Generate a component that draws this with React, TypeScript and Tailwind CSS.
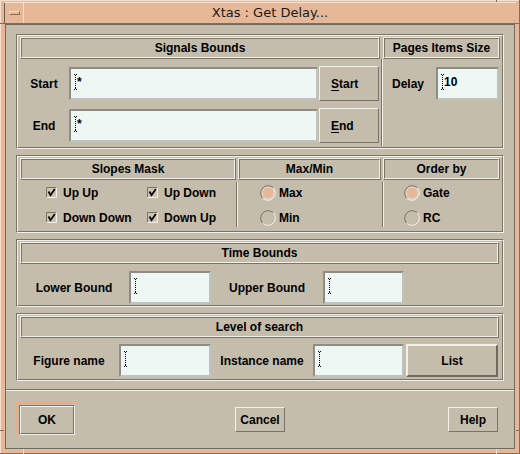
import type { ReactNode } from "react";

const sunk = "border-t-[#7a7466] border-l-[#7a7466] border-b-[#f3f0e9] border-r-[#f3f0e9]";
const raised = "border-t-[#f3f0e9] border-l-[#f3f0e9] border-b-[#7a7466] border-r-[#7a7466]";

function Panel({ className, children }: { className: string; children: ReactNode }) {
  return (
    <div className={`border ${sunk} ${className}`}>
      <div className={`h-full border ${raised} p-px flex flex-col`}>{children}</div>
    </div>
  );
}

function Header({ className, children }: { className: string; children: ReactNode }) {
  return (
    <div className={`h-[22px] shrink-0 border ${raised} ${className}`}>
      <div className={`h-full border ${sunk} flex items-center justify-center text-[12px] font-bold`}>
        {children}
      </div>
    </div>
  );
}

function VSep({ className = "" }: { className?: string }) {
  return <div className={`w-[2px] shrink-0 border-l border-r border-l-[#7a7466] border-r-[#f3f0e9] ${className}`} />;
}

// dotted I-beam text cursor
function Caret() {
  return (
    <svg width="3" height="16" viewBox="0 0 3 16" className="shrink-0">
      <path
        d="M0 0h1v1H0zM2 0h1v1H2zM1 1h1v1H1zM1 3h1v1H1zM1 5h1v1H1zM1 7h1v1H1zM1 9h1v1H1zM1 11h1v1H1zM1 13h1v1H1zM0 15h1v1H0zM2 15h1v1H2zM1 14h1v1H1z"
        fill="#000"
      />
    </svg>
  );
}

function Field({ className, text }: { className: string; text?: string }) {
  return (
    <div
      className={`shrink-0 border-2 border-t-[#8e8c86] border-l-[#8e8c86] border-b-[#bdc3be] border-r-[#bdc3be] bg-[#eef7f3] flex items-start pl-[3px] pt-[5px] ${className}`}
    >
      <Caret />
      {text && <span className="text-[12px] font-bold leading-[16px]">{text}</span>}
    </div>
  );
}

function BoundRow({ label, mn, rest }: { label: string; mn: string; rest: string }) {
  return (
    <div className="h-[35px] flex items-center">
      <span className="w-[50px] text-center text-[12px] font-bold">{label}</span>
      <Field className="w-[249px] h-[33px]" text="*" />
      <div className={`ml-px w-[60px] h-[35px] border ${raised} text-[12px] font-bold flex items-center pl-[11px]`}>
        <span className="underline underline-offset-2">{mn}</span>
        {rest}
      </div>
    </div>
  );
}

function Check({ label }: { label: string }) {
  return (
    <div className="h-[25px] flex items-center gap-[6px]">
      <svg width="11" height="11" viewBox="0 0 11 11" className="shrink-0">
        <rect x="0" y="0" width="11" height="11" fill="#cbc4b3" />
        <path d="M0.5 10.5V0.5H10.5" stroke="#7a7466" fill="none" />
        <path d="M0.5 10.5H10.5V0.5" stroke="#f3f0e9" fill="none" />
        <path d="M2.5 4.5L4.5 8.2L8.8 2" stroke="#000" strokeWidth="1.7" fill="none" />
      </svg>
      <span className="text-[12px] font-bold">{label}</span>
    </div>
  );
}

function Radio({ label, on = false }: { label: string; on?: boolean }) {
  return (
    <div className="h-[25px] flex items-center gap-[3px]">
      <svg width="16" height="16" viewBox="0 0 16 16" className="shrink-0">
        {on && <circle cx="8" cy="8" r="5.5" fill="#e6b898" />}
        {on && <circle cx="8" cy="8" r="6" stroke="#e8e2d6" fill="none" />}
        <path d="M2.7 13.3A7.5 7.5 0 0 1 13.3 2.7" stroke="#7a7466" fill="none" />
        <path d="M13.3 2.7A7.5 7.5 0 0 1 2.7 13.3" stroke="#f3f0e9" fill="none" />
      </svg>
      <span className="text-[12px] font-bold">{label}</span>
    </div>
  );
}

function Btn({ className, children }: { className: string; children: ReactNode }) {
  return (
    <div className={`border ${raised} flex items-center justify-center text-[12px] font-bold ${className}`}>
      {children}
    </div>
  );
}

export default function App() {
  return (
    <div className="relative w-[520px] h-[454px] bg-[#e6b898] flex flex-col pt-[2px] px-[4px] pb-[5px] font-['Liberation_Sans',Arial,sans-serif] text-black shadow-[inset_-1px_-1px_0_#8a6a50,inset_1px_1px_0_#f6dfcc]">
      {/* window frame resize-corner marks */}
      <div className="absolute left-0 top-[23px] w-[4px] h-px bg-[#8a6a50]" />
      <div className="absolute right-0 top-[23px] w-[4px] h-px bg-[#8a6a50]" />
      <div className="absolute left-0 bottom-[23px] w-[4px] h-px bg-[#8a6a50]" />
      <div className="absolute right-0 bottom-[23px] w-[4px] h-px bg-[#8a6a50]" />
      <div className="absolute left-[23px] bottom-0 w-px h-[5px] bg-[#f6dfcc]" />
      <div className="absolute right-[23px] bottom-0 w-px h-[5px] bg-[#f6dfcc]" />
      <div className="absolute right-[23px] top-0 w-px h-[2px] bg-[#8a6a50]" />

      {/* title bar */}
      <div className="h-[22px] shrink-0 flex border-t border-b border-t-[#f6dfcc] border-b-[#8a6a50]">
        <div className="w-[20px] flex items-center justify-center border-l border-r border-l-[#6b5a4a] border-r-[#f6dfcc]">
          <div className="w-[11px] h-[4px] border border-t-[#f6dfcc] border-l-[#f6dfcc] border-b-[#8a6a50] border-r-[#8a6a50]" />
        </div>
        <div className="flex-1 flex items-center justify-center font-['DejaVu_Sans',sans-serif] text-[13px] text-[#1a1a1a]">
          Xtas : Get Delay...
        </div>
      </div>

      {/* dialog body */}
      <div className="flex-1 mx-px bg-[#c5bdab] flex flex-col border border-[#6e6a60]">
        <div className="px-[10px] pt-[9px] flex flex-col gap-[6px]">
          <Panel className="h-[115px]">
            <div className="flex">
              <Header className="ml-px w-[360px]">Signals Bounds</Header>
              <Header className="ml-[3px] w-[117px]">Pages Items Size</Header>
            </div>
            <div className="flex flex-1">
              <div className="w-[362px] flex flex-col pt-[7px] gap-[7px]">
                <BoundRow label="Start" mn="S" rest="tart" />
                <BoundRow label="End" mn="E" rest="nd" />
              </div>
              <VSep />
              <div className="flex-1 pl-[9px] pt-[7px]">
                <div className="h-[35px] flex items-center">
                  <span className="text-[12px] font-bold">Delay</span>
                  <Field className="ml-[12px] w-[63px] h-[33px]" text="10" />
                </div>
              </div>
            </div>
          </Panel>

          <Panel className="h-[78px]">
            <div className="flex">
              <Header className="ml-px w-[216px]">Slopes Mask</Header>
              <Header className="ml-[2px] w-[143px]">Max/Min</Header>
              <Header className="ml-[2px] w-[117px]">Order by</Header>
            </div>
            <div className="flex flex-1">
              <div className="w-[217px] grid grid-cols-[101px_auto] grid-rows-[25px_25px] pl-[27px]">
                <Check label="Up Up" />
                <Check label="Up Down" />
                <Check label="Down Down" />
                <Check label="Down Up" />
              </div>
              <VSep className="mt-[2px] mb-[3px]" />
              <div className="w-[144px] flex flex-col pl-[22px]">
                <Radio label="Max" on />
                <Radio label="Min" />
              </div>
              <VSep className="mt-[2px] mb-[3px]" />
              <div className="flex-1 flex flex-col pl-[20px]">
                <Radio label="Gate" on />
                <Radio label="RC" />
              </div>
            </div>
          </Panel>

          <Panel className="h-[68px]">
            <Header className="ml-px mr-[2px]">Time Bounds</Header>
            <div className="flex-1 flex items-start pt-[7px] text-[12px] font-bold">
              <span className="w-[110px] h-[33px] flex items-center justify-center">Lower Bound</span>
              <Field className="w-[82px] h-[33px]" />
              <span className="w-[112px] h-[33px] flex items-center justify-center">Upper Bound</span>
              <Field className="w-[81px] h-[33px]" />
            </div>
          </Panel>

          <Panel className="h-[68px]">
            <Header className="ml-px mr-[2px]">Level of search</Header>
            <div className="flex-1 flex items-start pt-[6px] text-[12px] font-bold">
              <span className="w-[100px] h-[33px] flex items-center justify-center">Figure name</span>
              <Field className="w-[92px] h-[33px]" />
              <span className="w-[102px] h-[33px] flex items-center justify-center">Instance name</span>
              <Field className="w-[91px] h-[33px]" />
              <div className="ml-[2px] w-[92px] h-[33px] border-2 border-t-[#f3f0e9] border-l-[#f3f0e9] border-b-[#6e6a60] border-r-[#6e6a60] flex items-center justify-center">
                List
              </div>
            </div>
          </Panel>
        </div>

        <div className="mt-[8px] h-[2px] border-t border-b border-t-[#7a7466] border-b-[#f3f0e9]" />

        <div className="flex-1 flex items-center pl-[10px]">
          <div className="w-[62px] h-[36px] border border-[#e8ae8c] p-[2px]">
            <div className={`h-full border ${sunk}`}>
              <Btn className="h-full">OK</Btn>
            </div>
          </div>
          <Btn className="ml-[157px] w-[50px] h-[25px]">Cancel</Btn>
          <Btn className="ml-[163px] w-[50px] h-[25px]">Help</Btn>
        </div>
      </div>
    </div>
  );
}
